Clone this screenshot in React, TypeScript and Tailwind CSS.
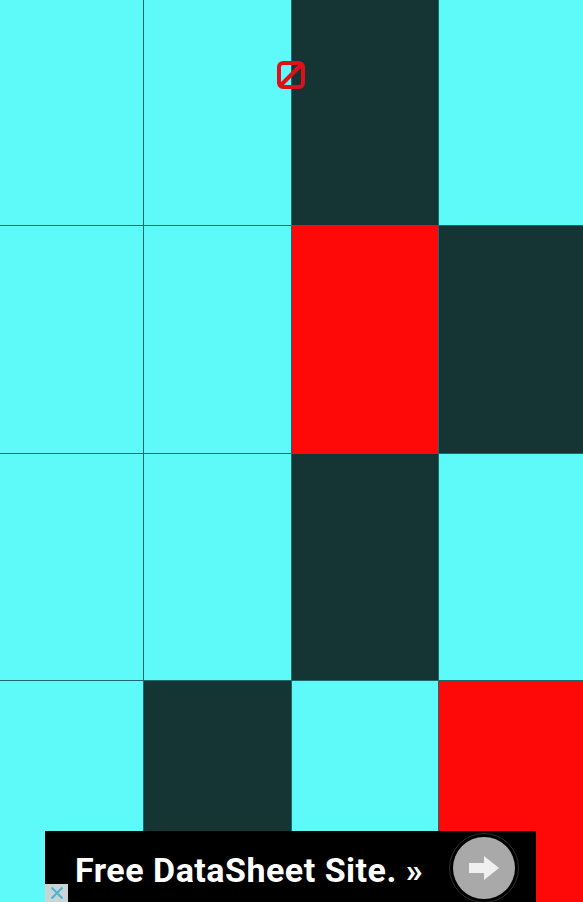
import React from "react";

const C = "bg-[#5ef9f9]";
const D = "bg-[#153434]";
const R = "bg-[#ff0808]";

const cells = [
  [C, C, D, C],
  [C, C, R, D],
  [C, C, D, C],
  [C, D, C, R],
];

export default function App() {
  return (
    <div className="relative w-[583px] h-[902px] overflow-hidden bg-[#1c6a6c] font-['Roboto',sans-serif]">
      <div className="grid grid-cols-[143px_147px_146px_1fr] grid-rows-[225px_227px_226px_1fr] gap-px w-full h-full">
        {cells.flat().map((c, i) => (
          <div key={i} className={c} />
        ))}
      </div>

      {/* marker on the board */}
      <svg
        className="absolute left-[277px] top-[61px]"
        width="28"
        height="28"
        viewBox="0 0 28 28"
        fill="none"
      >
        <rect x="2" y="2" width="24" height="24" rx="4" stroke="#e0101a" strokeWidth="4" />
        <path d="M4 24 L24 4" stroke="#e0101a" strokeWidth="4" />
      </svg>

      {/* ad banner */}
      <div className="absolute left-[45px] bottom-0 w-[491px] h-[71px] bg-black flex items-center">
        <span className="ml-[30px] mt-[6px] text-[34px] font-bold leading-none tracking-[0.5px] text-white whitespace-nowrap">
          Free DataSheet Site. »
        </span>
        <div className="absolute left-[404px] top-[2px] w-[70px] h-[70px] rounded-full border border-[#2e2e2e] flex items-center justify-center">
          <div className="w-[62px] h-[62px] rounded-full bg-[#a9a9a9] flex items-center justify-center">
            <svg width="32" height="26" viewBox="0 0 32 26">
              <path d="M1 8 H16 V1 L31 13 L16 25 V18 H1 Z" fill="#f0f0f0" />
            </svg>
          </div>
        </div>
        <div className="absolute left-0 bottom-0 w-[23px] h-[18px] bg-[#c8d4d6] flex items-center justify-center">
          <svg width="14" height="14" viewBox="0 0 14 14" fill="none">
            <path d="M1.5 1.5 L12.5 12.5 M12.5 1.5 L1.5 12.5" stroke="#4fb4cf" strokeWidth="2" />
          </svg>
        </div>
      </div>
    </div>
  );
}
